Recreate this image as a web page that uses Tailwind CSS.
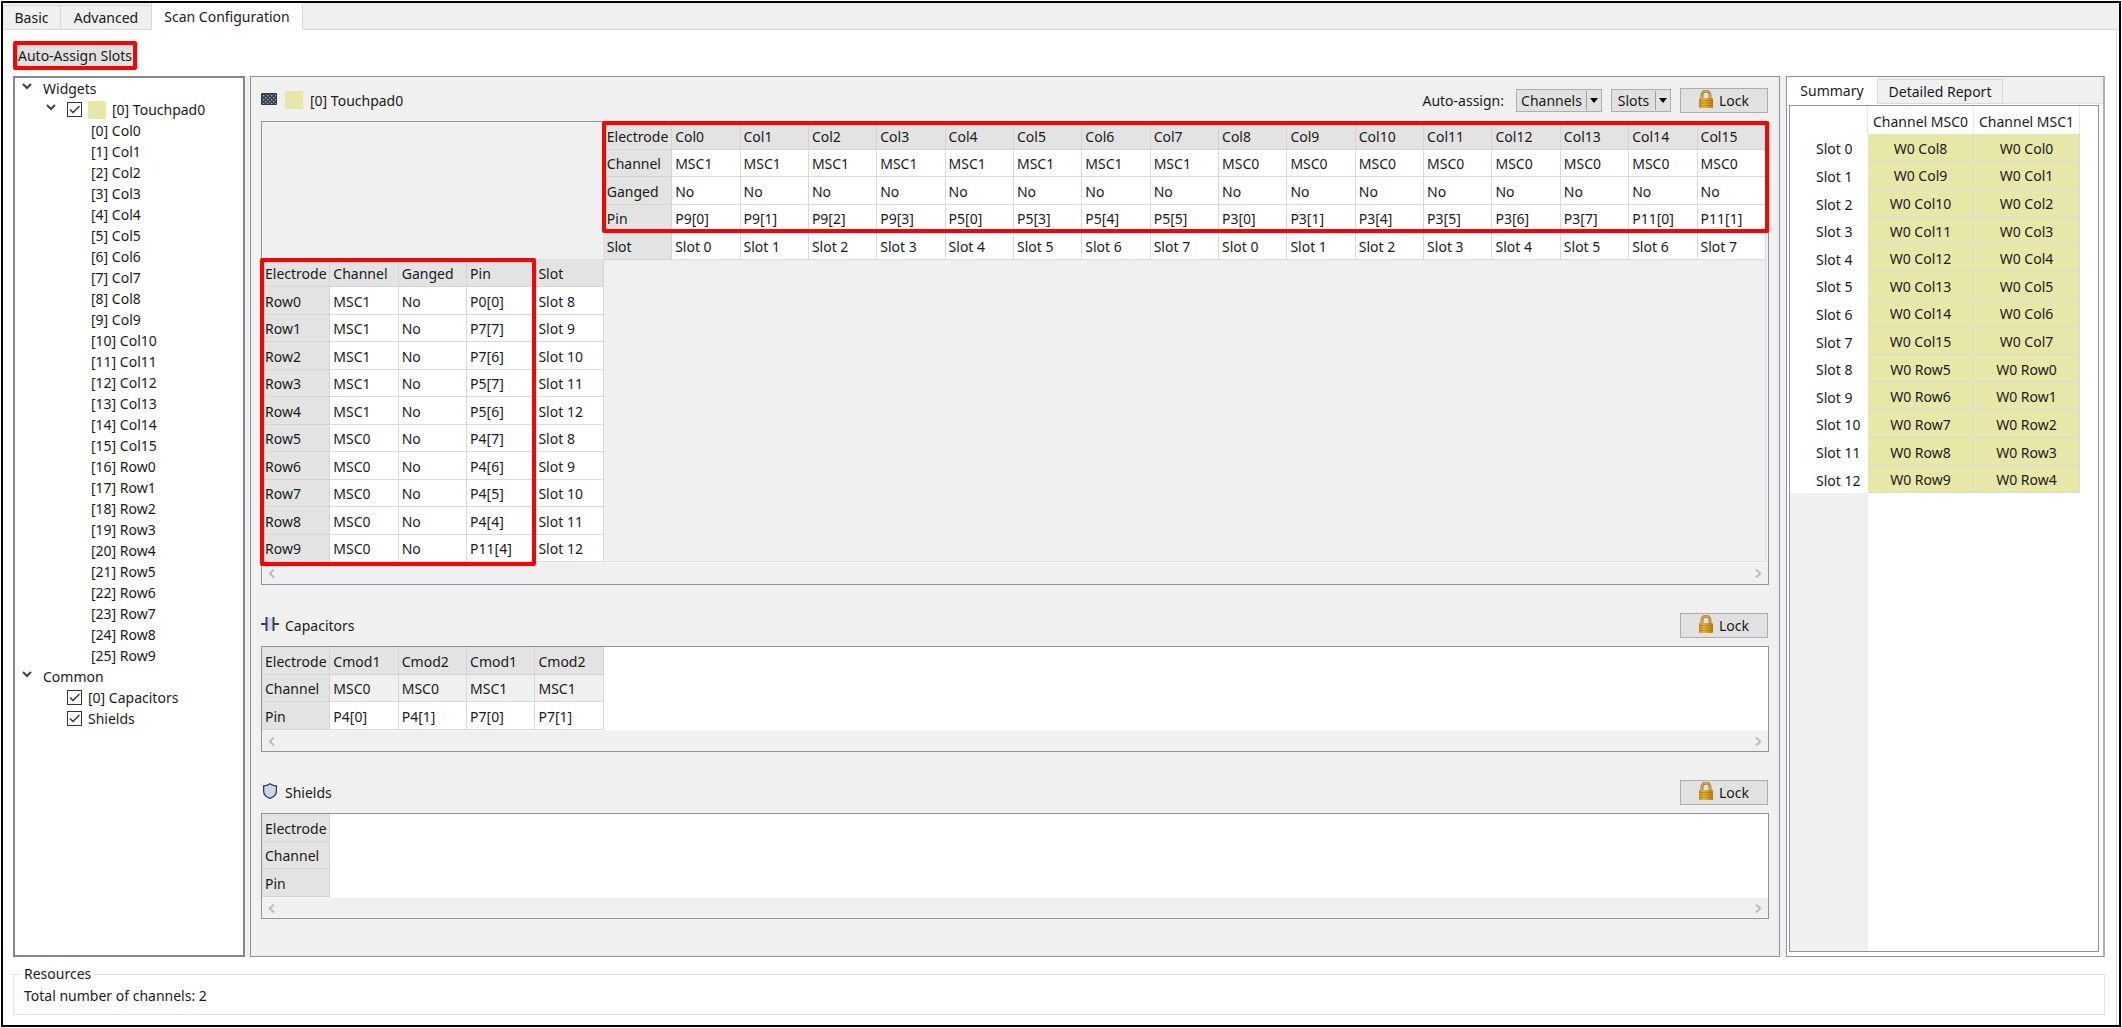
<!DOCTYPE html>
<html lang="en">
<head>
<meta charset="utf-8">
<title>Scan Configuration</title>
<script src="https://cdn.jsdelivr.net/npm/@tailwindcss/browser@4"></script>
</head>
<body class="flex min-h-screen flex-col bg-white p-px font-['Noto_Sans',sans-serif] text-[14px] leading-5 text-[#1a1a1a]">
<svg class="absolute size-0" aria-hidden="true">
  <defs>
    <pattern id="mesh" width="4" height="4" patternUnits="userSpaceOnUse">
      <rect width="4" height="4" fill="#343a42"/>
      <rect width="1.4" height="1.4" fill="#a9b7c6"/><rect x="2" y="2" width="1.4" height="1.4" fill="#a9b7c6"/>
    </pattern>
    <linearGradient id="gold" x1="0" x2="1">
      <stop offset="0" stop-color="#c88f17"/><stop offset=".35" stop-color="#e9b93c"/><stop offset="1" stop-color="#b67c05"/>
    </linearGradient>
    <symbol id="chev" viewBox="0 0 10 7"><path d="M1 1l4 4 4-4" fill="none" stroke="#404040" stroke-width="2"/></symbol>
    <symbol id="tick" viewBox="0 0 15 15"><path d="M3 7.5l3 3 6.500-6.500" fill="none" stroke="#333" stroke-width="1.400"/></symbol>
    <symbol id="lock" viewBox="0 0 14 18">
      <path d="M3 9V5a4 4 0 0 1 8 0v4" fill="none" stroke="#8f7433" stroke-width="2.800"/>
      <path d="M3 9V5a4 4 0 0 1 8 0v4" fill="none" stroke="#dcb04a" stroke-width="1.400"/>
      <rect y="8" width="14" height="10" rx="1" fill="url(#gold)"/>
      <path d="M0 10.500h14M0 13h14M0 15.500h14" stroke="#a87405" stroke-width=".6"/>
    </symbol>
    <symbol id="left" viewBox="0 0 7 9"><path d="M6 .5L1.800 4.500 6 8.500" fill="none" stroke="#bcbcbc" stroke-width="2"/></symbol>
    <symbol id="right" viewBox="0 0 7 9"><path d="M1 .5l4.200 4L1 8.500" fill="none" stroke="#bcbcbc" stroke-width="2"/></symbol>
  </defs>
</svg>
<div class="flex flex-1 flex-col border-2 border-black">
  <nav class="flex h-[27px] items-end bg-[#f0f0f0]" role="tablist">
    <button role="tab" class="h-[25px] w-[58px] border border-l-0 border-[#d9d9d9]">Basic</button>
    <button role="tab" class="h-[25px] w-[90px] border-y border-[#d9d9d9]">Advanced</button>
    <button role="tab" aria-selected="true" class="h-[27px] w-[152px] border-x border-[#d9d9d9] bg-white">Scan Configuration</button>
    <span class="h-px flex-1 bg-[#d9d9d9]"></span>
  </nav>
  <main class="mr-[2px] flex flex-1 flex-col border-r border-[#e3e3e3] pr-[11px] pl-[10px]">
    <div class="flex pt-[11px] pb-[6px]">
      <button class="flex h-[29px] w-[124px] items-center justify-center rounded-xs border-4 border-[#ff0000] bg-[#e1e1e1] whitespace-nowrap">Auto-Assign Slots</button>
    </div>
    <div class="flex flex-1">
      <section class="w-[232px] border-2 border-[#828790] bg-white" aria-label="Widgets">
        <ul id="tree"></ul>
      </section>
      <span class="w-[5px] bg-[#f0f0f0]"></span>
      <section class="flex min-w-0 flex-1 flex-col gap-7 border border-[#8c919b] bg-[#f0f0f0] px-[10px] pt-[11px]">
        <div>
          <div class="mb-2 flex h-[25px] items-center pr-px">
            <svg class="mr-2 mb-1 h-3 w-4" viewBox="0 0 16 12"><rect width="16" height="12" rx="1" fill="#343a42"/><rect x="1" y="1" width="14" height="10" fill="url(#mesh)"/></svg>
            <span class="mr-[7px] mb-px size-[18px] bg-[#e7e7a8]"></span>
            <h2 class="flex-1">[0] Touchpad0</h2>
            <span class="mr-3">Auto-assign:</span>
            <span class="mr-[9px] flex h-[23px] border border-[#adadad] bg-[#e1e1e1]">
              <button class="w-[69px]">Channels</button>
              <button class="my-px flex w-[15px] items-center justify-center border-l border-[#a0a0a0]" aria-label="Channel options"><svg class="h-[5px] w-2" viewBox="0 0 8 5"><path d="M0 0h8L4 5z"/></svg></button>
            </span>
            <span class="mr-[9px] flex h-[23px] border border-[#adadad] bg-[#e1e1e1]">
              <button class="w-[43px]">Slots</button>
              <button class="my-px flex w-[15px] items-center justify-center border-l border-[#a0a0a0]" aria-label="Slot options"><svg class="h-[5px] w-2" viewBox="0 0 8 5"><path d="M0 0h8L4 5z"/></svg></button>
            </span>
            <button class="flex h-[25px] w-[88px] items-center justify-center gap-[6px] border border-[#adadad] bg-[#e1e1e1]"><svg class="mb-1 h-[18px] w-[14px]"><use href="#lock"/></svg>Lock</button>
          </div>
          <div class="border border-[#8c919b]">
            <div class="relative mr-[2px]">
              <table id="pads" class="h-[440px] w-full table-fixed border-separate border-spacing-0 text-left"></table>
              <div class="pointer-events-none absolute -top-px -right-[3px] left-[calc(100%*5/22-2px)] h-[112px] rounded-xs border-4 border-[#ff0000]"></div>
              <div class="pointer-events-none absolute top-[136px] -bottom-[4px] -left-[2px] w-[calc(100%*4/22+3px)] rounded-xs border-4 border-[#ff0000]"></div>
            </div>
            <div class="flex h-[22px] items-center justify-between border-t border-[#f7f7f7] px-[6px]"><svg class="h-[9px] w-[7px]"><use href="#left"/></svg><svg class="h-[9px] w-[7px]"><use href="#right"/></svg></div>
          </div>
        </div>
        <div>
          <div class="mb-2 flex h-[25px] items-center pr-px">
            <svg class="mr-[6px] mb-1 h-[14px] w-[18px]" viewBox="0 0 18 14"><path d="M6.500 1h5v12h-5z" fill="#c9d8ea"/><path d="M0 7h5M13 7h5" stroke="#3a3f45" stroke-width="2"/><path d="M5.500 0v14M12.500 0v14" stroke="#3a3f45" stroke-width="2"/></svg>
            <h2 class="flex-1">Capacitors</h2>
            <button class="flex h-[25px] w-[88px] items-center justify-center gap-[6px] border border-[#adadad] bg-[#e1e1e1]"><svg class="mb-1 h-[18px] w-[14px]"><use href="#lock"/></svg>Lock</button>
          </div>
          <div class="border border-[#8c919b] bg-white">
            <table id="caps" class="h-[83px] w-[calc((100%-2px)*5/22)] table-fixed border-separate border-spacing-0 text-left"></table>
            <div class="flex h-[21px] items-center justify-between border-t border-[#f7f7f7] bg-[#f0f0f0] px-[6px]"><svg class="h-[9px] w-[7px]"><use href="#left"/></svg><svg class="h-[9px] w-[7px]"><use href="#right"/></svg></div>
          </div>
        </div>
        <div>
          <div class="mb-2 flex h-[25px] items-center pr-px">
            <svg class="mr-[6px] mb-1 h-4 w-[18px]" viewBox="0 0 18 16"><path d="M9 .8C7 2.300 4.800 2.900 2.600 2.900v5C2.600 11.500 5 13.800 9 15.300c4-1.500 6.400-3.800 6.400-7.400v-5C13.200 2.900 11 2.300 9 .8z" fill="#c9d8ea" stroke="#3a3f45" stroke-width="1.300"/></svg>
            <h2 class="flex-1">Shields</h2>
            <button class="flex h-[25px] w-[88px] items-center justify-center gap-[6px] border border-[#adadad] bg-[#e1e1e1]"><svg class="mb-1 h-[18px] w-[14px]"><use href="#lock"/></svg>Lock</button>
          </div>
          <div class="border border-[#8c919b] bg-white">
            <table id="shields" class="h-[83px] w-[calc((100%-2px)/22)] table-fixed border-separate border-spacing-0 text-left"></table>
            <div class="flex h-[21px] items-center justify-between border-t border-[#f7f7f7] bg-[#f0f0f0] px-[6px]"><svg class="h-[9px] w-[7px]"><use href="#left"/></svg><svg class="h-[9px] w-[7px]"><use href="#right"/></svg></div>
          </div>
        </div>
      </section>
      <span class="w-[6px] bg-[#f0f0f0]"></span>
      <section class="flex w-[319px] flex-col border border-r-2 border-[#8c919b] border-r-[#adb1b8] bg-[#f0f0f0]">
        <div class="flex h-[27px] items-end" role="tablist">
          <button role="tab" aria-selected="true" class="h-[27px] w-[90px] bg-white">Summary</button>
          <button role="tab" class="h-[25px] w-[126px] border border-[#d9d9d9]">Detailed Report</button>
          <span class="h-px flex-1 bg-[#e3e3e3]"></span>
        </div>
        <div class="flex flex-1 flex-col bg-white pt-px pr-[2px] pb-[4px] pl-[2px]">
          <div class="mr-[2px] flex flex-1 flex-col border border-[#8c919b]">
            <table id="summary" class="h-[387px] w-[290px] table-fixed border-separate border-spacing-0 text-center">
              <colgroup><col class="w-[78px]"><col class="w-[106px]"><col class="w-[106px]"></colgroup>
              <thead><tr class="h-7"><td class="border-r border-[#e6e6e6]"></td><th scope="col" class="border-r border-[#e6e6e6] p-0 pt-[3px] font-normal whitespace-nowrap">Channel MSC0</th><th scope="col" class="border-r border-[#e6e6e6] p-0 pt-[3px] font-normal whitespace-nowrap">Channel MSC1</th></tr></thead>
              <tbody></tbody>
            </table>
            <div class="w-[78px] flex-1 bg-[#f0f0f0]"></div>
          </div>
        </div>
      </section>
    </div>
    <fieldset class="mt-[7px] mb-[10px] h-[51px] border border-[#e2e2e2] px-[10px]">
      <legend class="-ml-[3px] px-[3px]">Resources</legend>
      <p class="pt-[2px]">Total number of channels: 2</p>
    </fieldset>
  </main>
</div>
<script>
const range = n => [...Array(n).keys()];
const chev = '<svg class="h-[7px] w-[10px]"><use href="#chev"/></svg>';
const box = '<span class="grid size-[15px]"><input type="checkbox" checked class="col-start-1 row-start-1 size-[15px] appearance-none border border-[#333] bg-white"><svg class="pointer-events-none col-start-1 row-start-1 size-[15px]"><use href="#tick"/></svg></span>';
const electrodes = [...range(16).map(i => 'Col' + i), ...range(10).map(i => 'Row' + i)];

const group = name => `<li class="flex h-[21px] items-center gap-[11px] pl-[7px]"><button aria-label="Toggle ${name}" class="pb-1">${chev}</button>${name}</li>`;
const leaf = name => `<li class="flex h-[21px] items-center pl-[52px]"><label class="flex items-center gap-[6px]">${box}${name}</label></li>`;
document.getElementById('tree').innerHTML =
  group('Widgets') +
  `<li class="flex h-[21px] items-center gap-[11px] pl-[31px]"><button aria-label="Toggle Touchpad0" class="pb-1">${chev}</button><label class="flex items-center gap-[6px]">${box}<span class="size-[18px] bg-[#e7e7a8]"></span>[0] Touchpad0</label></li>` +
  electrodes.map((e, i) => `<li class="h-[21px] pl-[76px] leading-[21px]">[${i}] ${e}</li>`).join('') +
  group('Common') + leaf('[0] Capacitors') + leaf('Shields');

const head = t => `<th class="border-r border-b border-[#d4d4d4] bg-[#e3e3e3] p-0 pt-[3px] pl-[3px] font-normal whitespace-nowrap">${t}</th>`;
const cell = t => `<td class="border-r border-b border-[#d9d9d9] bg-white p-0 pt-[3px] pl-[3px] whitespace-nowrap">${t}</td>`;
const grey = t => `<td class="border-r border-b border-[#d9d9d9] bg-[#f0f0f0] p-0 pt-[3px] pl-[3px] whitespace-nowrap">${t}</td>`;
const row = c => `<tr>${c}</tr>`;

const colPins = 'P9[0] P9[1] P9[2] P9[3] P5[0] P5[3] P5[4] P5[5] P3[0] P3[1] P3[4] P3[5] P3[6] P3[7] P11[0] P11[1]'.split(' ');
const rowPins = 'P0[0] P7[7] P7[6] P5[7] P5[6] P4[7] P4[6] P4[5] P4[4] P11[4]'.split(' ');
const cols = range(16);
document.getElementById('pads').innerHTML =
  '<colgroup>' + range(22).map(() => '<col>').join('') + '</colgroup>' +
  row('<td colspan="5" rowspan="5" class="border-r border-b border-[#e0e0e0] bg-[#f0f0f0]"></td>' + head('Electrode') + cols.map(i => head('Col' + i)).join('')) +
  row(head('Channel') + cols.map(i => cell(i < 8 ? 'MSC1' : 'MSC0')).join('')) +
  row(head('Ganged') + cols.map(() => cell('No')).join('')) +
  row(head('Pin') + colPins.map(cell).join('')) +
  row(head('Slot') + cols.map(i => cell('Slot ' + i % 8)).join('')) +
  row(['Electrode', 'Channel', 'Ganged', 'Pin', 'Slot'].map(head).join('') + '<td colspan="17" rowspan="11" class="border-r border-b border-[#e0e0e0] bg-[#f0f0f0]"></td>') +
  range(10).map(i => row(head('Row' + i) + cell(i < 5 ? 'MSC1' : 'MSC0') + cell('No') + cell(rowPins[i]) + cell('Slot ' + (8 + i % 5)))).join('');

document.getElementById('caps').innerHTML =
  row(['Electrode', 'Cmod1', 'Cmod2', 'Cmod1', 'Cmod2'].map(head).join('')) +
  row(head('Channel') + ['MSC0', 'MSC0', 'MSC1', 'MSC1'].map(grey).join('')) +
  row(head('Pin') + ['P4[0]', 'P4[1]', 'P7[0]', 'P7[1]'].map(cell).join(''));
document.getElementById('shields').innerHTML = ['Electrode', 'Channel', 'Pin'].map(t => row(head(t))).join('');

const slot = t => `<td class="border-r border-b border-[#d9d9d9] bg-[#e7e7a8] p-0 pt-[3px]">${t}</td>`;
document.querySelector('#summary tbody').innerHTML = range(13).map(i => row(
  `<th scope="row" class="p-0 pt-[3px] pl-[26px] text-left font-normal">Slot ${i}</th>` +
  slot('W0 ' + (i < 8 ? 'Col' + (i + 8) : 'Row' + (i - 3))) +
  slot('W0 ' + (i < 8 ? 'Col' + i : 'Row' + (i - 8))))).join('');
</script>
</body>
</html>
